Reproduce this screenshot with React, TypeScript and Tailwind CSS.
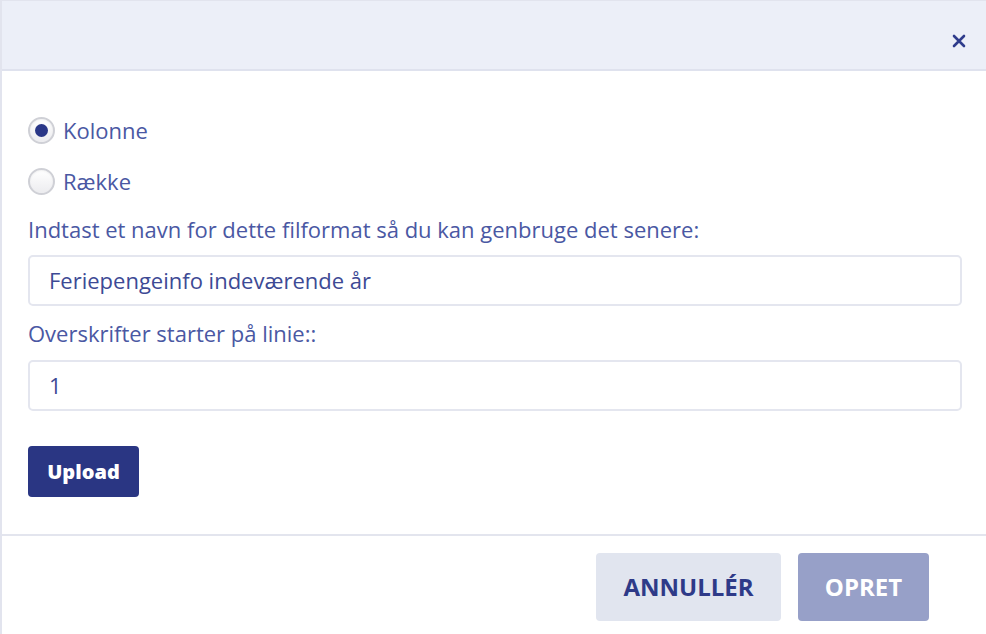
import { useState } from "react";

function Radio({ checked, label, onClick }: { checked: boolean; label: string; onClick: () => void }) {
  return (
    <button type="button" onClick={onClick} className="flex h-[30px] items-center gap-[8px] text-[22px] leading-[30px] text-[#4a58a3]">
      <span className="flex h-[27px] w-[27px] items-center justify-center rounded-full border-2 border-[#cfd0d6] bg-gradient-to-b from-white to-[#ececef] shadow-[inset_0_1px_2px_rgba(0,0,0,0.06)]">
        {checked && <span className="h-[13px] w-[13px] rounded-full bg-[#2a3787]" />}
      </span>
      {label}
    </button>
  );
}

export default function App() {
  const [mode, setMode] = useState("kolonne");

  return (
    <div
      className="flex h-[634px] w-[986px] flex-col overflow-hidden border-l-2 border-t border-[#e2e4ee] bg-white"
      style={{ fontFamily: '"Open Sans", sans-serif' }}
    >
      {/* Header */}
      <div className="flex h-[70px] shrink-0 items-center justify-end border-b-2 border-[#dfe2ee] bg-[#eceff8] pr-[20px] pt-[12px]">
        <svg width="14" height="14" viewBox="0 0 14 14" className="text-[#2f3c8c]">
          <path d="M2 2 L12 12 M12 2 L2 12" stroke="currentColor" strokeWidth="2.6" strokeLinecap="round" />
        </svg>
      </div>

      {/* Body */}
      <div className="flex flex-1 flex-col px-[26px] pt-[44px]">
        <div className="flex flex-col gap-[21px]">
          <Radio checked={mode === "kolonne"} label="Kolonne" onClick={() => setMode("kolonne")} />
          <Radio checked={mode === "raekke"} label="Række" onClick={() => setMode("raekke")} />
        </div>

        <label className="mt-[18px] text-[22px] leading-[30px] text-[#4a58a3]">
          Indtast et navn for dette filformat så du kan genbruge det senere:
        </label>
        <div className="mt-[11px] flex h-[51px] w-[934px] items-center rounded-[5px] border-2 border-[#e4e6ef] px-[19px] text-[22px] text-[#3d4a95]">
          Feriepengeinfo indeværende år
        </div>

        <label className="mt-[12px] text-[22px] leading-[30px] text-[#4a58a3]">Overskrifter starter på linie::</label>
        <div className="mt-[12px] flex h-[51px] w-[934px] items-center rounded-[5px] border-2 border-[#e4e6ef] px-[19px] text-[22px] text-[#3d4a95]">
          1
        </div>

        <div className="mt-[35px]">
          <button className="h-[51px] w-[111px] rounded-[4px] bg-[#2a3683] text-[20px] font-extrabold text-white">
            Upload
          </button>
        </div>
      </div>

      {/* Footer */}
      <div className="flex h-[100px] shrink-0 items-start justify-end gap-[17px] border-t-2 border-[#e3e5ee] pr-[57px] pt-[17px]">
        <button className="h-[68px] w-[185px] rounded-[4px] bg-[#e1e5ef] text-[24px] font-bold text-[#2e3a88]">
          ANNULLÉR
        </button>
        <button className="h-[68px] w-[131px] rounded-[4px] bg-[#97a0c8] text-[24px] font-bold text-white">
          OPRET
        </button>
      </div>
    </div>
  );
}
